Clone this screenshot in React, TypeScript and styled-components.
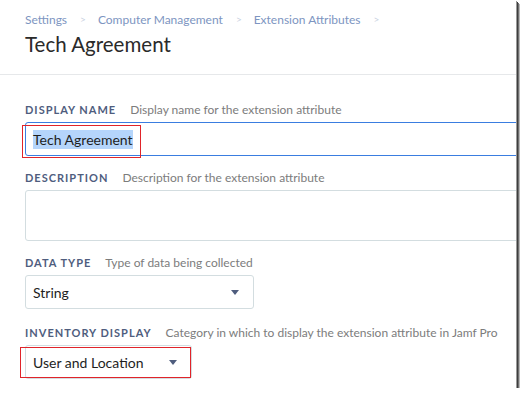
import React from "react";
import styled, { createGlobalStyle } from "styled-components";

const Global = createGlobalStyle`
  html, body { margin: 0; padding: 0; background: #ffffff; }
  body { font-family: "Lato", "Open Sans", sans-serif; }
  * { box-sizing: border-box; }
`;

const Frame = styled.div`
  position: relative;
  width: 516px;
  height: 388px;
  overflow: hidden;
  background: #ffffff;
  box-shadow: 1px 1px 0 #9a9a9a, 2px 2px 0 #3e3e3e, 3px 3px 0 #707070, 4px 4px 0 #b8b8b8;
`;

const Header = styled.header`
  padding: 12px 0 0 25px;
  height: 75px;
  border-bottom: 1px solid #e6e8ea;
`;

const Crumbs = styled.nav`
  display: flex;
  align-items: center;
  font-size: 12px;
  color: #7d95c1;
  height: 14px;
`;

const Sep = styled.span`
  color: #c9d1df;
  font-size: 10px;
  margin: 0 12px 0 13px;
`;

const Title = styled.h1`
  margin: 6px 0 0 0;
  font-weight: 400;
  font-size: 20.5px;
  color: #2a2a2a;
  line-height: 24px;
`;

const Form = styled.div`
  padding: 27px 0 0 25px;
  display: flex;
  flex-direction: column;
`;

const Field = styled.div<{ $gap?: number }>`
  display: flex;
  flex-direction: column;
  margin-bottom: ${(p) => p.$gap ?? 14}px;
`;

const LabelRow = styled.div`
  display: flex;
  align-items: baseline;
  height: 14px;
  margin-bottom: 6px;
  white-space: nowrap;
`;

const Label = styled.span`
  font-weight: 700;
  font-size: 11px;
  letter-spacing: 1px;
  color: #4f5d7e;
  text-transform: uppercase;
`;

const Help = styled.span`
  font-size: 12px;
  color: #7c7c7c;
  margin-left: 14px;
`;

const Box = styled.div<{ $w?: number; $h: number; $focus?: boolean }>`
  width: ${(p) => (p.$w ? `${p.$w}px` : "520px")};
  height: ${(p) => p.$h}px;
  border: 1px solid ${(p) => (p.$focus ? "#3a7de0" : "#d3dde0")};
  border-radius: 3px;
  display: flex;
  align-items: center;
  justify-content: space-between;
  padding: 0 14px 0 7px;
  font-size: 14px;
  color: #1e1e1e;
`;

const Selected = styled.span`
  background: #b5d5fb;
  padding: 1px 0;
`;

const Arrow = styled.span`
  width: 0;
  height: 0;
  border-left: 4.5px solid transparent;
  border-right: 4.5px solid transparent;
  border-top: 5px solid #4f5d7e;
`;

const Mark = styled.div<{ $x: number; $y: number; $w: number; $h: number }>`
  position: absolute;
  left: ${(p) => p.$x}px;
  top: ${(p) => p.$y}px;
  width: ${(p) => p.$w}px;
  height: ${(p) => p.$h}px;
  border: 1px solid #e0242a;
  pointer-events: none;
`;

export default function App() {
  return (
    <>
      <Global />
      <Frame>
        <Header>
          <Crumbs>
            <span>Settings</span>
            <Sep>&gt;</Sep>
            <span>Computer Management</span>
            <Sep>&gt;</Sep>
            <span>Extension Attributes</span>
            <Sep>&gt;</Sep>
          </Crumbs>
          <Title>Tech Agreement</Title>
        </Header>
        <Form>
          <Field>
            <LabelRow>
              <Label>Display Name</Label>
              <Help>Display name for the extension attribute</Help>
            </LabelRow>
            <Box $h={34} $focus>
              <Selected>Tech Agreement</Selected>
            </Box>
          </Field>
          <Field>
            <LabelRow>
              <Label>Description</Label>
              <Help>Description for the extension attribute</Help>
            </LabelRow>
            <Box $h={51} />
          </Field>
          <Field $gap={16}>
            <LabelRow>
              <Label>Data Type</Label>
              <Help>Type of data being collected</Help>
            </LabelRow>
            <Box $w={229} $h={34}>
              <span>String</span>
              <Arrow />
            </Box>
          </Field>
          <Field>
            <LabelRow>
              <Label>Inventory Display</Label>
              <Help>Category in which to display the extension attribute in Jamf Pro</Help>
            </LabelRow>
            <Box $w={167} $h={34}>
              <span>User and Location</span>
              <Arrow />
            </Box>
          </Field>
        </Form>
        <Mark $x={22} $y={125} $w={119} $h={33} />
        <Mark $x={20} $y={347} $w={171} $h={31} />
      </Frame>
    </>
  );
}
